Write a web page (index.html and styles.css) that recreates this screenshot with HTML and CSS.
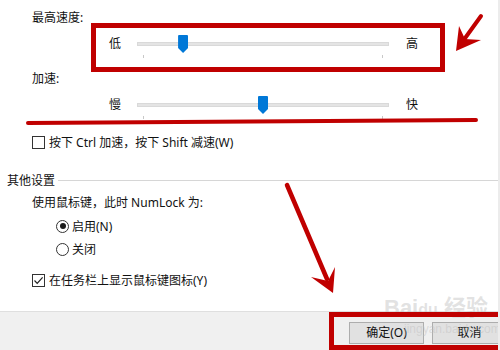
FILE: index.html
```html
<!DOCTYPE html>
<html lang="zh-CN">
<head>
    <meta charset="UTF-8">
    <title>鼠标键设置</title>
    <link rel="stylesheet" href="styles.css">
</head>
<body>
    <div id="dialog">
        <div id="content">
            <div class="field-title title-speed">最高速度:</div>
            <div class="slider-row">
                <span class="slider-end">低</span>
                <div class="slider">
                    <div class="track"></div>
                    <div class="range"><span class="thumb" style="left: 16.7%;"></span></div>
                </div>
                <span class="slider-end">高</span>
            </div>

            <div class="field-title title-accel">加速:</div>
            <div class="slider-row">
                <span class="slider-end">慢</span>
                <div class="slider">
                    <div class="track"></div>
                    <div class="range"><span class="thumb" style="left: 50%;"></span></div>
                </div>
                <span class="slider-end">快</span>
            </div>

            <div class="check-row check-ctrl">
                <span class="box"></span>
                <span>按下 Ctrl 加速，按下 Shift 减速(W)</span>
            </div>

            <div class="group-header">
                <span>其他设置</span>
                <div class="group-line"></div>
            </div>
            <div class="plain-row">使用鼠标键，此时 NumLock 为:</div>
            <div class="radio-row radio-on">
                <span class="radio checked"></span>
                <span>启用(N)</span>
            </div>
            <div class="radio-row radio-off">
                <span class="radio"></span>
                <span>关闭</span>
            </div>
            <div class="check-row check-tray">
                <span class="box">
                    <svg width="11" height="11" viewBox="0 0 11 11"><path d="M1.5 5.5 L4.2 8.3 L9.6 2.3" fill="none" stroke="#222" stroke-width="1.2"/></svg>
                </span>
                <span>在任务栏上显示鼠标键图标(Y)</span>
            </div>
        </div>

        <div id="footer">
            <div class="buttons">
                <span class="btn">确定(O)</span>
                <span class="btn">取消</span>
            </div>
        </div>

        <div id="watermark">
            <span class="wm-big">Bai<b>du</b> 经验</span>
            <span class="wm-small">jingyan.baidu.com</span>
        </div>

        <!-- red annotations drawn on top of the screenshot -->
        <svg id="marks" width="500" height="350" viewBox="0 0 500 350">
            <rect x="93.5" y="25.5" width="349" height="44" fill="none" stroke="#c00000" stroke-width="5"/>
            <rect x="331.5" y="314.5" width="180" height="33" fill="none" stroke="#c00000" stroke-width="5"/>
            <path d="M28 123 L476 120" stroke="#c00000" stroke-width="4" stroke-linecap="round"/>
            <path d="M481 16 L463 41" stroke="#c00000" stroke-width="4" stroke-linecap="round"/>
            <polygon points="456,51 459,26 465,39 481,40" fill="#c00000"/>
            <path d="M287 185 L327 279" stroke="#c00000" stroke-width="4.5" stroke-linecap="round"/>
            <polygon points="333,293 311,277 328,281 335,267" fill="#c00000"/>
        </svg>
    </div>
</body>
</html>
```

FILE: styles.css
```css
body {
    margin: 0;
    background-color: white;
    color: #111;
    font-family: "Noto Sans", "Noto Sans CJK SC", sans-serif;
    font-size: 12px;
}
#dialog {
    position: relative;
    width: 500px;
    height: 350px;
    overflow: hidden;
    display: flex;
    flex-direction: column;
    box-sizing: border-box;
    border-right: 2px solid #ececec;
}
#content {
    flex: 1;
}
.field-title {
    height: 22px;
    line-height: 22px;
    padding-left: 32px;
}
.title-speed {
    margin-top: 7px;
}
.title-accel {
    margin-top: 9px;
}
.slider-row {
    display: flex;
    align-items: center;
    height: 30px;
    padding-left: 109px;
}
.slider-end {
    width: 13px;
    line-height: 30px;
    align-self: flex-start;
}
.slider {
    position: relative;
    width: 252px;
    height: 30px;
    margin: 0 17px 0 15px;
}
.track {
    margin-top: 13px;
    height: 2px;
    background-color: #e4e4e4;
    border: 1px solid #d9d9d9;
}
.slider::before, .slider::after {
    content: "";
    position: absolute;
    top: 26px;
    width: 1px;
    height: 3px;
    background-color: #c8c8c8;
}
.slider::before {
    left: 6px;
}
.slider::after {
    right: 6px;
}
.range {
    position: absolute;
    left: 6px;
    right: 6px;
    top: 6px;
}
.thumb {
    position: absolute;
    top: 0;
    width: 10px;
    height: 18px;
    margin-left: -5px;
    background-color: #0078d7;
    border-radius: 1px 1px 0 0;
    clip-path: polygon(0 0, 100% 0, 100% 72%, 50% 100%, 0 72%);
}
.check-row, .radio-row, .plain-row {
    display: flex;
    align-items: center;
    height: 22px;
}
.check-row {
    padding-left: 32px;
    gap: 4px;
}
.check-ctrl {
    margin-top: 11px;
}
.check-tray {
    margin-top: 9px;
}
.box {
    width: 11px;
    height: 11px;
    border: 1px solid #333;
    background-color: white;
    display: flex;
}
.group-header {
    display: flex;
    align-items: center;
    height: 22px;
    margin-top: 16px;
    padding-left: 7px;
    gap: 3px;
}
.group-line {
    flex: 1;
    height: 1px;
    background-color: #d6d6d6;
}
.plain-row {
    padding-left: 32px;
}
.radio-row {
    padding-left: 56px;
    gap: 3px;
}
.radio-on {
    margin-top: 2px;
}
.radio-off {
    margin-top: 1px;
}
.radio {
    width: 11px;
    height: 11px;
    border: 1px solid #333;
    border-radius: 50%;
    display: flex;
    align-items: center;
    justify-content: center;
}
.radio.checked::after {
    content: "";
    width: 6px;
    height: 6px;
    border-radius: 50%;
    background-color: #1a1a1a;
}
#footer {
    height: 38px;
    background-color: #f0f0f0;
    border-top: 1px solid #dfdfdf;
    padding-top: 10px;
    box-sizing: border-box;
    height: 39px;
}
.buttons {
    display: flex;
    gap: 8px;
    padding-left: 349px;
}
.btn {
    flex: none;
    width: 73px;
    height: 20px;
    line-height: 20px;
    text-align: center;
    background-color: #e1e1e1;
    border: 1px solid #adadad;
}
#watermark {
    position: absolute;
    left: 384px;
    top: 296px;
    display: flex;
    flex-direction: column;
    color: rgba(190, 190, 190, 0.45);
    pointer-events: none;
}
.wm-big {
    font-family: "Liberation Sans", "Noto Sans CJK SC", sans-serif;
    font-size: 22px;
    font-weight: bold;
    line-height: 24px;
}
.wm-big b {
    font-size: 16px;
}
.wm-small {
    font-family: "Liberation Sans", sans-serif;
    font-size: 12px;
    margin-left: 20px;
}
#marks {
    position: absolute;
    left: 0;
    top: 0;
    pointer-events: none;
}
```
